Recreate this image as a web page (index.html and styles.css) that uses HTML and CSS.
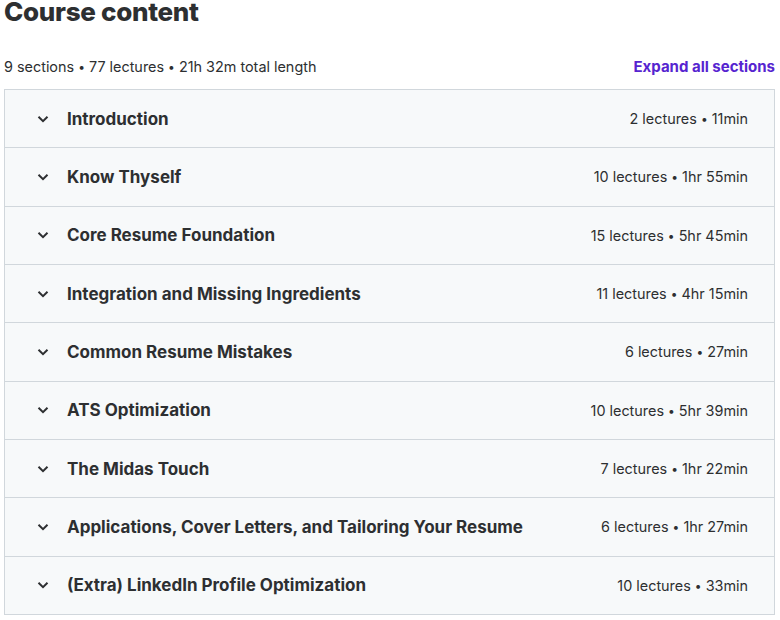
FILE: index.html
```html
<!DOCTYPE html>
<html>
<head>
<meta charset="utf-8">
<link rel="stylesheet" href="styles.css">
</head>
<body>
<div class="page">
  <h2 class="title">Course content</h2>
  <div class="meta">
    <span class="stats">9 sections <span class="dot">•</span> 77 lectures <span class="dot">•</span> 21h 32m total length</span>
    <button class="expand">Expand all sections</button>
  </div>
  <div class="sections">
    <div class="row"><span class="chev"><svg width="12" height="8" viewBox="0 0 12 8"><path d="M1.5 1.8 L6 6.2 L10.5 1.8" fill="none" stroke="#2d2f31" stroke-width="2"/></svg></span><span class="name">Introduction</span><span class="info">2 lectures <span class="dot">•</span> 11min</span></div>
    <div class="row"><span class="chev"><svg width="12" height="8" viewBox="0 0 12 8"><path d="M1.5 1.8 L6 6.2 L10.5 1.8" fill="none" stroke="#2d2f31" stroke-width="2"/></svg></span><span class="name">Know Thyself</span><span class="info">10 lectures <span class="dot">•</span> 1hr 55min</span></div>
    <div class="row"><span class="chev"><svg width="12" height="8" viewBox="0 0 12 8"><path d="M1.5 1.8 L6 6.2 L10.5 1.8" fill="none" stroke="#2d2f31" stroke-width="2"/></svg></span><span class="name">Core Resume Foundation</span><span class="info">15 lectures <span class="dot">•</span> 5hr 45min</span></div>
    <div class="row"><span class="chev"><svg width="12" height="8" viewBox="0 0 12 8"><path d="M1.5 1.8 L6 6.2 L10.5 1.8" fill="none" stroke="#2d2f31" stroke-width="2"/></svg></span><span class="name">Integration and Missing Ingredients</span><span class="info">11 lectures <span class="dot">•</span> 4hr 15min</span></div>
    <div class="row"><span class="chev"><svg width="12" height="8" viewBox="0 0 12 8"><path d="M1.5 1.8 L6 6.2 L10.5 1.8" fill="none" stroke="#2d2f31" stroke-width="2"/></svg></span><span class="name">Common Resume Mistakes</span><span class="info">6 lectures <span class="dot">•</span> 27min</span></div>
    <div class="row"><span class="chev"><svg width="12" height="8" viewBox="0 0 12 8"><path d="M1.5 1.8 L6 6.2 L10.5 1.8" fill="none" stroke="#2d2f31" stroke-width="2"/></svg></span><span class="name">ATS Optimization</span><span class="info">10 lectures <span class="dot">•</span> 5hr 39min</span></div>
    <div class="row"><span class="chev"><svg width="12" height="8" viewBox="0 0 12 8"><path d="M1.5 1.8 L6 6.2 L10.5 1.8" fill="none" stroke="#2d2f31" stroke-width="2"/></svg></span><span class="name">The Midas Touch</span><span class="info">7 lectures <span class="dot">•</span> 1hr 22min</span></div>
    <div class="row"><span class="chev"><svg width="12" height="8" viewBox="0 0 12 8"><path d="M1.5 1.8 L6 6.2 L10.5 1.8" fill="none" stroke="#2d2f31" stroke-width="2"/></svg></span><span class="name">Applications, Cover Letters, and Tailoring Your Resume</span><span class="info">6 lectures <span class="dot">•</span> 1hr 27min</span></div>
    <div class="row"><span class="chev"><svg width="12" height="8" viewBox="0 0 12 8"><path d="M1.5 1.8 L6 6.2 L10.5 1.8" fill="none" stroke="#2d2f31" stroke-width="2"/></svg></span><span class="name">(Extra) LinkedIn Profile Optimization</span><span class="info">10 lectures <span class="dot">•</span> 33min</span></div>
  </div>
</div>
</body>
</html>
```
FILE: styles.css
```css
html, body {
  margin: 0;
  padding: 0;
  background: #ffffff;
}
body {
  font-family: Inter, "Noto Sans", sans-serif;
  color: #2d2f31;
}
.page {
  padding: 0 5px 0 4px;
}
.title {
  margin: 0;
  font-size: 26px;
  line-height: 24px;
  font-weight: 800;
  letter-spacing: -0.3px;
  padding-top: 0;
}
.meta {
  display: flex;
  justify-content: space-between;
  align-items: center;
  height: 22px;
  margin-top: 31px;
  margin-bottom: 12px;
}
.stats {
  font-size: 14.4px;
  color: #2d2f31;
}
.dot {
  font-size: 12px;
  vertical-align: 1px;
}
.expand {
  border: none;
  background: none;
  padding: 0;
  font-family: inherit;
  font-size: 15px;
  font-weight: 700;
  color: #5624d0;
}
.sections {
  border: 1px solid #d1d7dc;
  background: #f7f9fa;
}
.row {
  display: flex;
  align-items: center;
  height: 57.33px;
  border-bottom: 1px solid #d1d7dc;
  padding: 0 26px 0 32px;
}
.row:last-child {
  border-bottom: none;
}
.chev {
  display: flex;
  width: 12px;
  margin-right: 18px;
}
.name {
  flex: 1;
  font-size: 17px;
  font-weight: 700;
}
.info {
  font-size: 14.4px;
  color: #2d2f31;
}
```
